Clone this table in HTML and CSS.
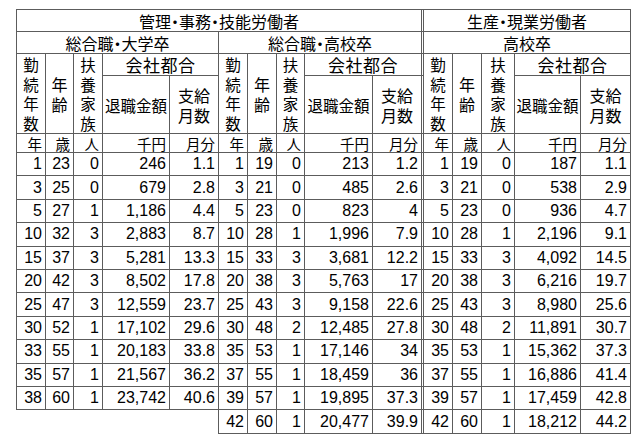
FILE: index.html
```html
<!DOCTYPE html>
<html lang="ja">
<head>
<meta charset="utf-8">
<title>退職金</title>
<link rel="stylesheet" href="styles.css">
</head>
<body>
<div class="sheet">
  <!-- row 1 -->
  <div class="c hd first top-row sep span10">管理・事務・技能労働者</div>
  <div class="c hd top-row span5">生産・現業労働者</div>
  <!-- row 2 -->
  <div class="c hd first span5">総合職・大学卒</div>
  <div class="c hd sep span5">総合職・高校卒</div>
  <div class="c hd span5">高校卒</div>
  <!-- row 3 / 4 -->
  <div class="c hd first stack rspan">勤<br>続<br>年<br>数</div>
  <div class="c hd rspan">年<br>齢</div>
  <div class="c hd stack rspan">扶<br>養<br>家<br>族</div>
  <div class="c hd big span2">会社都合</div>
  <div class="c hd stack rspan">勤<br>続<br>年<br>数</div>
  <div class="c hd rspan">年<br>齢</div>
  <div class="c hd stack rspan">扶<br>養<br>家<br>族</div>
  <div class="c hd big sep span2">会社都合</div>
  <div class="c hd stack rspan">勤<br>続<br>年<br>数</div>
  <div class="c hd rspan">年<br>齢</div>
  <div class="c hd stack rspan">扶<br>養<br>家<br>族</div>
  <div class="c hd big span2">会社都合</div>
  <div class="c hd small">退職金額</div>
  <div class="c hd">支給<br>月数</div>
  <div class="c hd small">退職金額</div>
  <div class="c hd sep">支給<br>月数</div>
  <div class="c hd small">退職金額</div>
  <div class="c hd">支給<br>月数</div>
  <!-- units -->
  <div class="c u first">年</div><div class="c u">歳</div><div class="c u">人</div><div class="c u">千円</div><div class="c u">月分</div>
  <div class="c u">年</div><div class="c u">歳</div><div class="c u">人</div><div class="c u">千円</div><div class="c u sep">月分</div>
  <div class="c u">年</div><div class="c u">歳</div><div class="c u">人</div><div class="c u">千円</div><div class="c u">月分</div>
  <!-- data -->
  <div class="c n first">1</div><div class="c n">23</div><div class="c n">0</div><div class="c n">246</div><div class="c n">1.1</div><div class="c n">1</div><div class="c n">19</div><div class="c n">0</div><div class="c n">213</div><div class="c n sep">1.2</div><div class="c n">1</div><div class="c n">19</div><div class="c n">0</div><div class="c n">187</div><div class="c n">1.1</div>
  <div class="c n first">3</div><div class="c n">25</div><div class="c n">0</div><div class="c n">679</div><div class="c n">2.8</div><div class="c n">3</div><div class="c n">21</div><div class="c n">0</div><div class="c n">485</div><div class="c n sep">2.6</div><div class="c n">3</div><div class="c n">21</div><div class="c n">0</div><div class="c n">538</div><div class="c n">2.9</div>
  <div class="c n first">5</div><div class="c n">27</div><div class="c n">1</div><div class="c n">1,186</div><div class="c n">4.4</div><div class="c n">5</div><div class="c n">23</div><div class="c n">0</div><div class="c n">823</div><div class="c n sep">4</div><div class="c n">5</div><div class="c n">23</div><div class="c n">0</div><div class="c n">936</div><div class="c n">4.7</div>
  <div class="c n first">10</div><div class="c n">32</div><div class="c n">3</div><div class="c n">2,883</div><div class="c n">8.7</div><div class="c n">10</div><div class="c n">28</div><div class="c n">1</div><div class="c n">1,996</div><div class="c n sep">7.9</div><div class="c n">10</div><div class="c n">28</div><div class="c n">1</div><div class="c n">2,196</div><div class="c n">9.1</div>
  <div class="c n first">15</div><div class="c n">37</div><div class="c n">3</div><div class="c n">5,281</div><div class="c n">13.3</div><div class="c n">15</div><div class="c n">33</div><div class="c n">3</div><div class="c n">3,681</div><div class="c n sep">12.2</div><div class="c n">15</div><div class="c n">33</div><div class="c n">3</div><div class="c n">4,092</div><div class="c n">14.5</div>
  <div class="c n first">20</div><div class="c n">42</div><div class="c n">3</div><div class="c n">8,502</div><div class="c n">17.8</div><div class="c n">20</div><div class="c n">38</div><div class="c n">3</div><div class="c n">5,763</div><div class="c n sep">17</div><div class="c n">20</div><div class="c n">38</div><div class="c n">3</div><div class="c n">6,216</div><div class="c n">19.7</div>
  <div class="c n first">25</div><div class="c n">47</div><div class="c n">3</div><div class="c n">12,559</div><div class="c n">23.7</div><div class="c n">25</div><div class="c n">43</div><div class="c n">3</div><div class="c n">9,158</div><div class="c n sep">22.6</div><div class="c n">25</div><div class="c n">43</div><div class="c n">3</div><div class="c n">8,980</div><div class="c n">25.6</div>
  <div class="c n first">30</div><div class="c n">52</div><div class="c n">1</div><div class="c n">17,102</div><div class="c n">29.6</div><div class="c n">30</div><div class="c n">48</div><div class="c n">2</div><div class="c n">12,485</div><div class="c n sep">27.8</div><div class="c n">30</div><div class="c n">48</div><div class="c n">2</div><div class="c n">11,891</div><div class="c n">30.7</div>
  <div class="c n first">33</div><div class="c n">55</div><div class="c n">1</div><div class="c n">20,183</div><div class="c n">33.8</div><div class="c n">35</div><div class="c n">53</div><div class="c n">1</div><div class="c n">17,146</div><div class="c n sep">34</div><div class="c n">35</div><div class="c n">53</div><div class="c n">1</div><div class="c n">15,362</div><div class="c n">37.3</div>
  <div class="c n first">35</div><div class="c n">57</div><div class="c n">1</div><div class="c n">21,567</div><div class="c n">36.2</div><div class="c n">37</div><div class="c n">55</div><div class="c n">1</div><div class="c n">18,459</div><div class="c n sep">36</div><div class="c n">37</div><div class="c n">55</div><div class="c n">1</div><div class="c n">16,886</div><div class="c n">41.4</div>
  <div class="c n first">38</div><div class="c n">60</div><div class="c n">1</div><div class="c n">23,742</div><div class="c n">40.6</div><div class="c n">39</div><div class="c n">57</div><div class="c n">1</div><div class="c n">19,895</div><div class="c n sep">37.3</div><div class="c n">39</div><div class="c n">57</div><div class="c n">1</div><div class="c n">17,459</div><div class="c n">42.8</div>
  <div class="c n lead">42</div><div class="c n">60</div><div class="c n">1</div><div class="c n">20,477</div><div class="c n sep">39.9</div><div class="c n">42</div><div class="c n">60</div><div class="c n">1</div><div class="c n">18,212</div><div class="c n">44.2</div>
</div>
</body>
</html>
```
FILE: styles.css
```css
html, body {
  margin: 0;
  padding: 0;
  background: #ffffff;
}

body {
  padding: 9px 0 0 16px;
  color: #000;
  font-family: "Liberation Sans", Arial, "Noto Sans CJK JP", sans-serif;
}

.sheet {
  display: grid;
  width: 615px;
  grid-template-columns:
    30px 28px 29px 67px 49px
    29px 29px 28px 68px 51px
    29px 29px 33px 66px 50px;
  grid-template-rows: 23px 22px 22px 58px 19px repeat(12, 23.42px);
}

.c {
  box-sizing: border-box;
  border-right: 1px solid #5c5c5c;
  border-bottom: 1px solid #5c5c5c;
  display: flex;
  align-items: center;
  min-width: 0;
}

.c.first { border-left: 1px solid #5c5c5c; }
.c.top-row { border-top: 1px solid #5c5c5c; }
.c.sep { border-right: 3px double #5c5c5c; }
.c.lead {
  grid-column: 6;
  box-shadow: -1px 0 0 #5c5c5c;
}

.span10 { grid-column: span 10; }
.span5 { grid-column: span 5; }
.span2 { grid-column: span 2; }
.rspan { grid-row: span 2; }

/* header cells */
.hd {
  justify-content: center;
  text-align: center;
  font-family: "Noto Sans CJK JP", sans-serif;
  font-feature-settings: "palt";
  font-weight: 400;
  font-size: 16px;
  line-height: 20px;
  white-space: nowrap;
}

.hd.stack {
  align-items: flex-start;
  padding-top: 1px;
  font-size: 15.5px;
  line-height: 19.5px;
}

.hd.big {
  font-size: 17px;
  letter-spacing: 0.5px;
}

.hd.small {
  font-size: 15.5px;
}

/* unit row */
.u {
  justify-content: flex-end;
  padding-right: 3px;
  font-family: "Noto Sans CJK JP", sans-serif;
  font-size: 14.5px;
  line-height: 17px;
  white-space: nowrap;
}

/* numbers */
.n {
  justify-content: flex-end;
  padding-right: 3px;
  font-size: 16px;
  line-height: 18px;
  white-space: nowrap;
}
```
